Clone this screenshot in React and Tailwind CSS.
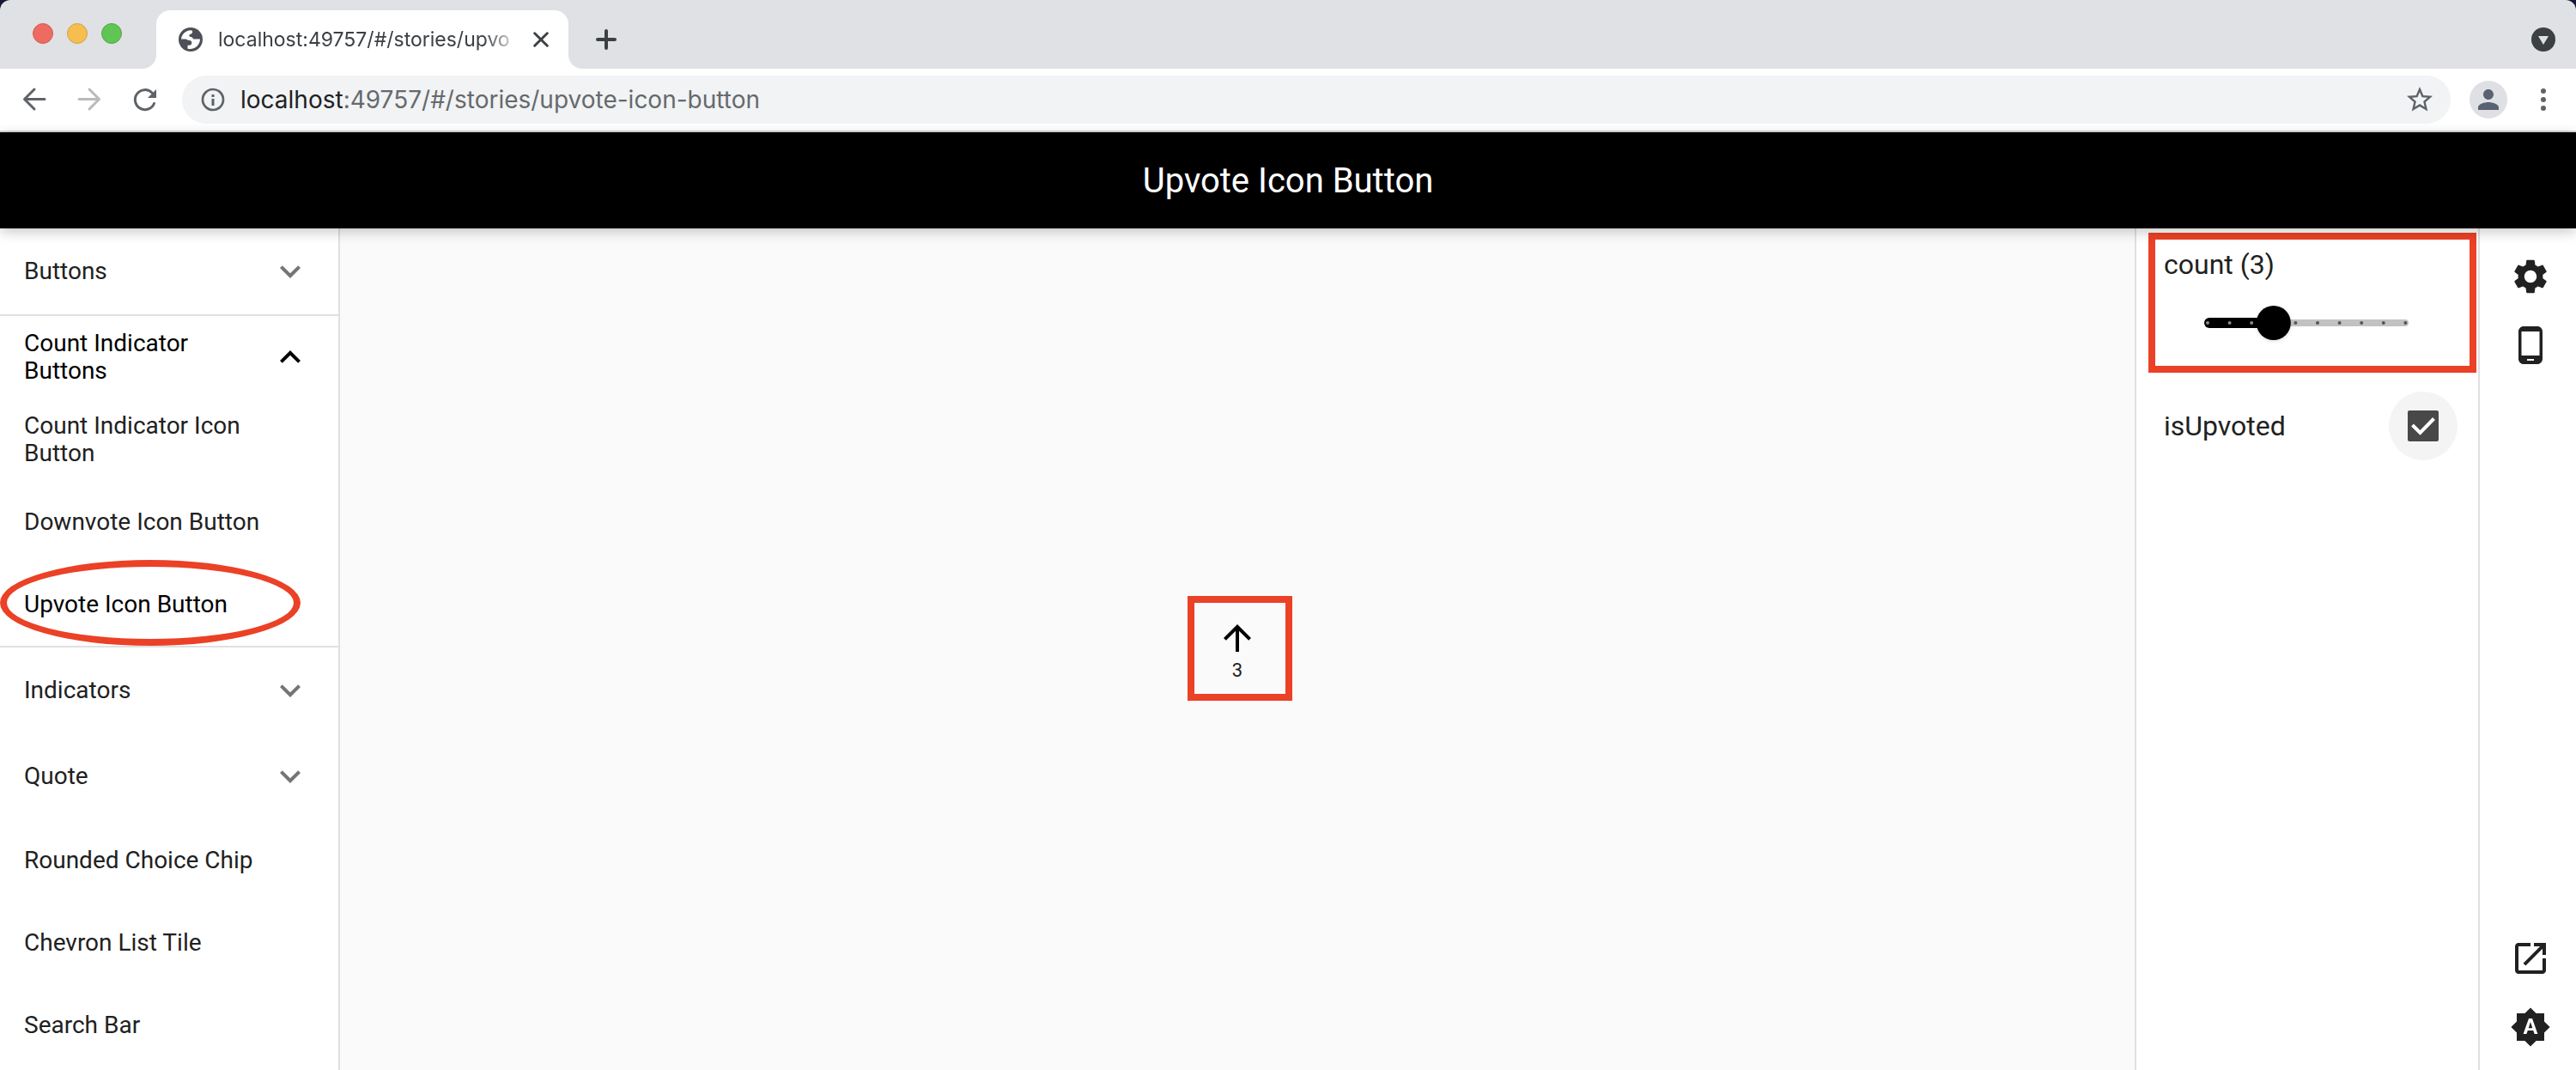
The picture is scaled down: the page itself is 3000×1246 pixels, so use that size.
import { useState } from "react";

const ROBOTO = "font-['Roboto',sans-serif]";

function Icon({ d, className }) {
  return (
    <svg viewBox="0 0 24 24" fill="currentColor" aria-hidden="true" className={className}>
      <path d={d} />
    </svg>
  );
}

const paths = {
  up: "M4 12l1.41 1.41L11 7.83V20h2V7.83l5.58 5.59L20 12l-8-8-8 8z",
  star: "M22 9.24l-7.19-.62L12 2 9.19 8.63 2 9.24l5.46 4.73L5.82 21 12 17.27 18.18 21l-1.63-7.03L22 9.24zM12 15.4l-3.76 2.27 1-4.28-3.32-2.88 4.38-.38L12 6.1l1.71 4.04 4.38.38-3.32 2.88 1 4.28L12 15.4z",
  person: "M12 12c2.21 0 4-1.79 4-4s-1.79-4-4-4-4 1.79-4 4 1.79 4 4 4zm0 2c-2.67 0-8 1.34-8 4v2h16v-2c0-2.66-5.33-4-8-4z",
  expandMore: "M16.59 8.59L12 13.17 7.41 8.59 6 10l6 6 6-6z",
  expandLess: "M12 8l-6 6 1.41 1.41L12 10.83l4.59 4.58L18 14z",
  settings:
    "M19.14 12.94c.04-.3.06-.61.06-.94 0-.32-.02-.64-.07-.94l2.03-1.58c.18-.14.23-.41.12-.61l-1.92-3.32c-.12-.22-.37-.29-.59-.22l-2.39.96c-.5-.38-1.03-.7-1.62-.94l-.36-2.54c-.04-.24-.24-.41-.48-.41h-3.84c-.24 0-.43.17-.47.41l-.36 2.54c-.59.24-1.13.57-1.62.94l-2.39-.96c-.22-.08-.47 0-.59.22L2.740 8.870c-.12.21-.08.47.12.61l2.03 1.58c-.05.3-.09.63-.09.94s.02.64.07.94l-2.03 1.58c-.18.14-.23.41-.12.61l1.92 3.32c.12.22.37.29.59.22l2.39-.96c.5.38 1.03.7 1.62.94l.36 2.54c.05.24.24.41.48.41h3.84c.24 0 .44-.17.47-.41l.36-2.54c.59-.24 1.13-.56 1.62-.94l2.39.96c.22.08.47 0 .59-.22l1.92-3.32c.12-.22.07-.47-.12-.61l-2.01-1.58zM12 15.6c-1.98 0-3.6-1.62-3.6-3.6s1.62-3.6 3.6-3.6 3.6 1.62 3.6 3.6-1.62 3.6-3.6 3.6z",
  phone:
    "M16 1H8C6.340 1 5 2.340 5 4v16c0 1.66 1.34 3 3 3h8c1.66 0 3-1.34 3-3V4c0-1.66-1.34-3-3-3zm-2 20h-4v-1h4v1zm3.25-3H6.75V4h10.5v14z",
  open: "M19 19H5V5h7V3H5c-1.11 0-2 .9-2 2v14c0 1.1.89 2 2 2h14c1.1 0 2-.9 2-2v-7h-2v7zM14 3v2h3.59l-9.83 9.83 1.41 1.41L19 6.41V10h2V3h-7z",
  brightness:
    "M10.85 12.65h2.3L12 9l-1.15 3.65zM20 8.69V4h-4.69L12 .69 8.69 4H4v4.69L.69 12 4 15.31V20h4.69L12 23.31 15.31 20H20v-4.69L23.31 12 20 8.69zM14.3 16l-.7-2h-3.2l-.7 2H7.8L11 7h2l3.2 9h-1.9z",
};

function TabStrip() {
  return (
    <div className="flex h-20 items-end rounded-t-xl bg-[#dfe1e5] pr-6">
      <div className="flex h-full w-[166px] shrink-0 items-center gap-4 pb-0.5 pl-[38px]">
        <button aria-label="Close window" className="size-6 rounded-full border border-[#d35d50] bg-[#ed6b60]" />
        <button aria-label="Minimize window" className="size-6 rounded-full border border-[#d6a243] bg-[#f5be4f]" />
        <button aria-label="Zoom window" className="size-6 rounded-full border border-[#54a73d] bg-[#61c555]" />
      </div>
      <div className="size-4 shrink-0 bg-white">
        <div className="size-full rounded-br-2xl bg-[#dfe1e5]" />
      </div>
      <div className="flex h-[68px] w-[480px] shrink-0 items-center rounded-t-2xl bg-white pl-[26px]">
        <svg viewBox="0 0 28 28" className="size-7 shrink-0" aria-hidden="true">
          <circle cx="14" cy="14" r="14" fill="#4d5056" />
          <path
            d="M3 13.500C3.500 8 8 3.500 14 3.200l2 .6c.5 2-.3 3.700-2.500 4.200-1.700.4-1.500 2.200-.3 2.800 2 .3 3.300 1 3.800 2.700H25c0 6-4.800 11.500-11.500 11.500-1.500 0-2.500-.3-3-.6v-3.600c2.500.3 4.500-.5 4.800-2.600.2-2-.8-3-2.800-3.200C10.500 14.700 9 13.800 8 13.500z"
            fill="#fff"
          />
        </svg>
        <span className="ml-[18px] flex-1 font-[Inter,sans-serif] text-[23px] whitespace-nowrap text-[#3c4043] [mask-image:linear-gradient(to_right,black_88%,transparent)]">
          localhost:49757/#/stories/upvo
        </span>
        <button aria-label="Close tab" className="mr-4 ml-2 flex size-8 items-center justify-center text-[#3c4043]">
          <svg viewBox="0 0 16 16" className="size-[18px]" stroke="currentColor" strokeWidth="2.600" strokeLinecap="round" aria-hidden="true">
            <path d="M1.500 1.500l13 13M14.500 1.500l-13 13" />
          </svg>
        </button>
      </div>
      <div className="size-4 shrink-0 bg-white">
        <div className="size-full rounded-bl-2xl bg-[#dfe1e5]" />
      </div>
      <button aria-label="New tab" className="flex h-[68px] w-14 items-center justify-center text-[#3c4043]">
        <svg viewBox="0 0 24 24" className="size-6" stroke="currentColor" strokeWidth="4" strokeLinecap="round" aria-hidden="true">
          <path d="M12 2v20M2 12h20" />
        </svg>
      </button>
      <button aria-label="Search tabs" className="ml-auto flex h-[68px] items-center">
        <svg viewBox="0 0 28 28" className="size-7" aria-hidden="true">
          <circle cx="14" cy="14" r="14" fill="#3c4043" />
          <path d="M8 10h12l-6 10z" fill="#dfe1e5" />
        </svg>
      </button>
    </div>
  );
}

function NavIcon({ children }) {
  return (
    <svg
      viewBox="0 0 32 32"
      className="size-8"
      fill="none"
      stroke="currentColor"
      strokeWidth="3"
      strokeLinecap="round"
      strokeLinejoin="round"
      aria-hidden="true"
    >
      {children}
    </svg>
  );
}

function Toolbar() {
  return (
    <div className="flex h-[74px] items-center border-b-2 border-[#d9d9d9] bg-white pr-5 pl-6 text-[#5f6368]">
      <button aria-label="Back" className="w-16">
        <NavIcon><path d="M28 15.500H5M16 4L4.500 15.500 16 27" /></NavIcon>
      </button>
      <button aria-label="Forward" className="w-16 text-[#bababc]">
        <NavIcon><path d="M4 15.500h23M16 4l11.500 11.500L16 27" /></NavIcon>
      </button>
      <button aria-label="Reload" className="w-[60px]">
        <NavIcon>
          <path d="M27.500 20.500A11.500 11.500 0 1 1 25 8" />
          <path d="M30 4v10H20z" fill="currentColor" stroke="none" />
        </NavIcon>
      </button>
      <div className="flex h-14 flex-1 items-center rounded-full bg-[#f1f3f4] pr-[18px] pl-5">
        <svg viewBox="0 0 32 32" className="size-8 shrink-0" aria-hidden="true">
          <circle cx="16" cy="16" r="12" fill="none" stroke="currentColor" strokeWidth="2.700" />
          <path d="M14.500 15h3v8h-3zM14.500 10h3v3h-3z" fill="currentColor" />
        </svg>
        <a href="#/stories/upvote-icon-button" className="ml-4 flex-1 font-[Inter,sans-serif] text-[28px] text-[#66696d]">
          <span className="text-[#202124]">localhost</span>:49757/#/stories/upvote-icon-button
        </a>
        <button aria-label="Bookmark this page"><Icon d={paths.star} className="size-9" /></button>
      </div>
      <button aria-label="Profile" className="ml-[22px] flex size-11 items-center justify-center rounded-full bg-[#dee0e4] text-[#5a6172]">
        <Icon d={paths.person} className="size-9" />
      </button>
      <button aria-label="Browser menu" className="ml-6">
        <svg viewBox="0 0 36 36" className="size-9" fill="currentColor" aria-hidden="true">
          <circle cx="18" cy="8" r="3" />
          <circle cx="18" cy="18" r="3" />
          <circle cx="18" cy="28" r="3" />
        </svg>
      </button>
    </div>
  );
}

function Folder({ title, open, children }) {
  return (
    <li className={open ? "border-y-2 border-[#e0e0e0]" : "border-y-2 border-transparent"}>
      <button
        aria-expanded={!!open}
        className={`flex h-24 w-full items-center justify-between pr-8 pl-7 text-left ${open ? "text-black" : ""}`}
      >
        <span className="max-w-60">{title}</span>
        <Icon
          d={open ? paths.expandLess : paths.expandMore}
          className={open ? "size-12 shrink-0 text-black" : "size-12 shrink-0 text-[#757575]"}
        />
      </button>
      {children}
    </li>
  );
}

function Story({ title, active, children }) {
  return (
    <li className="relative">
      <a
        href="#/stories"
        aria-current={active ? "page" : undefined}
        className={`flex h-24 items-center pr-14 pl-7 ${active ? "text-black" : ""}`}
      >
        {title}
      </a>
      {children}
    </li>
  );
}

function Sidebar() {
  return (
    <nav className="w-[396px] shrink-0 border-r-2 border-[#e0e0e0] bg-white text-[28px] leading-8 text-[#212121]">
      <ul>
        <Folder title="Buttons" />
        <Folder title="Count Indicator Buttons" open>
          <ul>
            <Story title="Count Indicator Icon Button" />
            <Story title="Downvote Icon Button" />
            <Story title="Upvote Icon Button" active>
              <span className="pointer-events-none absolute -top-1 left-0 h-[100px] w-[350px] rounded-[50%] border-8 border-[#eb4126]" />
            </Story>
          </ul>
        </Folder>
        <Folder title="Indicators" />
        <Folder title="Quote" />
        <Story title="Rounded Choice Chip" />
        <Story title="Chevron List Tile" />
        <Story title="Search Bar" />
      </ul>
    </nav>
  );
}

function Slider({ value, onChange }) {
  const x = (n) => 4 + n * 25.6;
  return (
    <div className="relative mx-auto h-10 w-60">
      <svg viewBox="0 0 240 40" className="size-full overflow-visible" aria-hidden="true">
        <rect x="4" y="16" width="234" height="8" rx="4" fill="#c2c2c2" />
        <rect x="0" y="14" width={x(value)} height="12" rx="6" fill="#000" />
        {Array.from({ length: 10 }, (_, n) => (
          <circle key={n} cx={x(n)} cy="20" r="2" fill={n < value ? "#8a8a8a" : "#555"} />
        ))}
        <circle cx={x(value)} cy="20" r="20" fill="#000" className="drop-shadow-sm" />
      </svg>
      <input
        id="count"
        type="range"
        min="0"
        max="9"
        value={value}
        onChange={(e) => onChange(Number(e.target.value))}
        className="absolute inset-0 size-full cursor-pointer opacity-0"
      />
    </div>
  );
}

function Knobs({ count, setCount, upvoted, setUpvoted }) {
  return (
    <aside className="w-[402px] shrink-0 border-x-2 border-[#e0e0e0] bg-white text-[32px] leading-10 text-[#212121]">
      <div className="relative h-[174px] px-8 pt-[22px]">
        <label htmlFor="count" className="block">count ({count})</label>
        <div className="mt-7">
          <Slider value={count} onChange={setCount} />
        </div>
        <span className="pointer-events-none absolute top-[5px] right-0.5 bottom-1.5 left-3.5 border-8 border-[#eb4126]" />
      </div>
      <div className="flex items-center justify-between pt-4 pr-6 pl-8">
        <label htmlFor="upvoted">isUpvoted</label>
        <span className="relative flex size-20 items-center justify-center rounded-full bg-[#f4f4f4]">
          <input
            id="upvoted"
            type="checkbox"
            checked={upvoted}
            onChange={(e) => setUpvoted(e.target.checked)}
            className="size-9 appearance-none rounded-xs border-4 border-[#484848] checked:bg-[#484848]"
          />
          {upvoted && (
            <svg viewBox="0 0 36 36" className="pointer-events-none absolute size-9" fill="none" stroke="white" strokeWidth="4" aria-hidden="true">
              <path d="M5.500 17l9 9L30.500 9.500" />
            </svg>
          )}
        </span>
      </div>
    </aside>
  );
}

function RailButton({ label, d }) {
  return (
    <button aria-label={label} className="flex size-20 items-center justify-center">
      <Icon d={d} className="size-12" />
    </button>
  );
}

export default function App() {
  const [count, setCount] = useState(3);
  const [upvoted, setUpvoted] = useState(true);
  return (
    <div className={`flex min-h-screen flex-col bg-[#141a33] ${ROBOTO}`}>
      <TabStrip />
      <Toolbar />
      <header className="relative z-10 flex h-28 items-center justify-center bg-black pt-0.5 text-white shadow-[0_4px_14px_rgba(0,0,0,0.22)]">
        <h1 className="text-[40px]">Upvote Icon Button</h1>
      </header>
      <div className="flex flex-1">
        <Sidebar />
        <main className="flex flex-1 items-center justify-center bg-[#fafafa]">
          <button aria-label="Upvote" className="relative flex size-[124px] flex-col items-center justify-center pt-0.5 text-black">
            <Icon d={paths.up} className="size-12" />
            <span className="text-[22px] leading-7 text-[#212121]">{count}</span>
            <span className="pointer-events-none absolute top-0 -right-0.5 bottom-0.5 left-1 border-8 border-[#eb4126]" />
          </button>
        </main>
        <Knobs count={count} setCount={setCount} upvoted={upvoted} setUpvoted={setUpvoted} />
        <div className="flex w-28 shrink-0 flex-col items-center bg-white pt-4 pb-2.5 pl-1.5 text-[#212121]">
          <RailButton label="Settings" d={paths.settings} />
          <RailButton label="Device" d={paths.phone} />
          <div className="flex-1" />
          <RailButton label="Open in new tab" d={paths.open} />
          <RailButton label="Theme mode" d={paths.brightness} />
        </div>
      </div>
    </div>
  );
}
